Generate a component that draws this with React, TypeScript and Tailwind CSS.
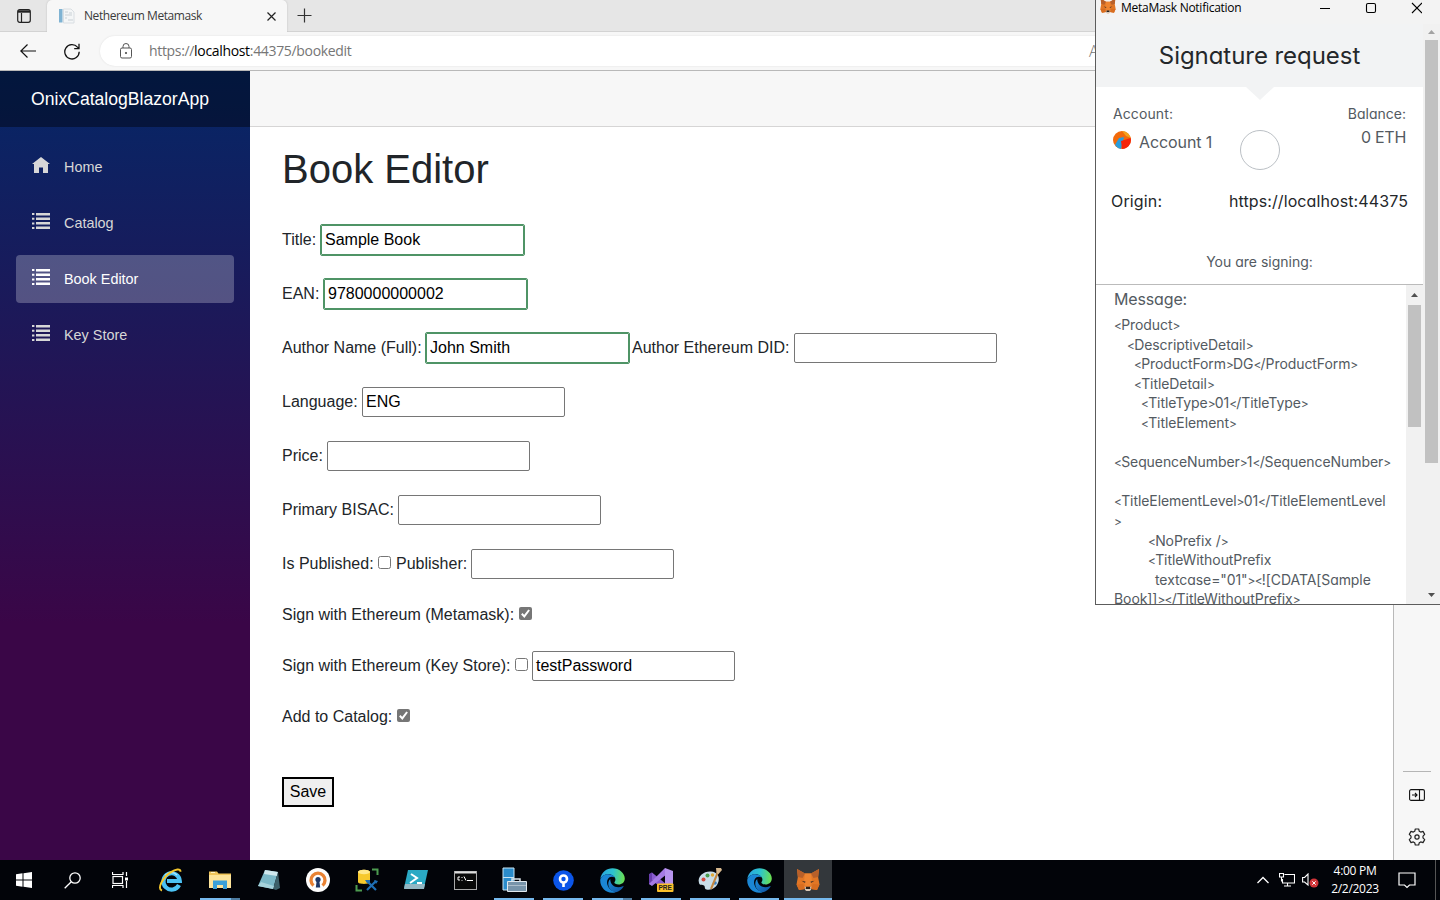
import React from "react";

const ui = "font-['Open_Sans','Noto_Sans',sans-serif]";
const euclid = "font-[Inter,sans-serif] [font-feature-settings:'cv11']";

function Fox({ size }: { size: number }) {
  return (
    <svg width={size} height={size} viewBox="0 0 24 24">
      <path d="M1 1l8 4.500h6L23 1l-.8 8.500 1.300 7L21 22l-6-1-1.500 2h-3L9 21l-6 1-2.500-5.500 1.300-7z" fill="#e27625" />
      <path d="M1 1l8 4.500-2.500 4.500L2 9z M23 1l-8 4.500 2.500 4.500L22 9z" fill="#b8602a" />
      <path d="M9 5.500h6l1 8-1.500 5h-5L8 13.500z" fill="#ee8430" />
      <path d="M5.500 12.700l4 .8-.5 1.500zM18.500 12.700l-4 .8.5 1.500z" fill="#4a3324" />
      <path d="M8.500 18.500l1.500.5h4l1.500-.5-.5 3.500-1.500 1h-3L9 22z" fill="#d8c9ba" />
      <path d="M10 18.800h4l.3 2.200H9.700z" fill="#2a211c" />
      <path d="M.5 16.500L7 16l2 5-6 1zM23.500 16.500L17 16l-2 5 6 1z" fill="#d86d20" />
    </svg>
  );
}

function Edge() {
  return (
    <svg width="25" height="25" viewBox="0 0 24 24">
      <defs>
        <linearGradient id="edgeTop" x1="0" y1=".4" x2="1" y2=".5">
          <stop offset="0" stopColor="#2aa5e0" />
          <stop offset=".5" stopColor="#2cc3cf" />
          <stop offset="1" stopColor="#6be04f" />
        </linearGradient>
        <linearGradient id="edgeLow" x1="0" y1="0" x2="1" y2="1">
          <stop offset="0" stopColor="#1c8fdc" />
          <stop offset="1" stopColor="#0f4f9e" />
        </linearGradient>
      </defs>
      <path d="M.3 10C1.500 4 6.300.2 12 .2c6.500 0 11.800 4.800 11.800 9.800 0 3.500-2.700 5.800-6 5.800-2.500 0-4-1-4-1.800 0-.6 1-1.100 1-2.900C14.800 8.500 12 6 8.300 6 4.500 6 1.500 8 .3 10z" fill="url(#edgeTop)" />
      <path d="M.2 12C.2 8.500 4 6 8 6c3 0 5 1.200 6 3-5-2-8 2-7 6.500 1 4.200 4.500 7 8.500 7.200-1 .8-2.500 1.100-4 1.100C5.500 23.800.2 18.500.2 12z" fill="#1b86d4" />
      <path d="M9.800 10.500c-3.500 3-2.300 12 5.500 12.700 3-.6 5.500-2.500 7.200-5.200.3-.5-.2-.8-.6-.6-5.900 2.800-12.200-.4-12.100-6.900z" fill="url(#edgeLow)" />
    </svg>
  );
}

const taskIcons: { icon: React.ReactNode; running?: boolean; multi?: boolean; active?: boolean }[] = [
  {
    icon: (
      <svg width="26" height="26" viewBox="0 0 26 26">
        <path d="M21 18A8.200 8.200 0 1 1 21.800 14H9" fill="none" stroke="#4cc3f5" strokeWidth="4.200" />
        <path d="M7 8.500A8 8 0 0 1 19 8" fill="none" stroke="#a9e6fc" strokeWidth="1.500" />
        <path d="M4 23.500C-1.500 22 5 10 12.500 5.300 17.500 2.300 22.500 1 22.500 4.700" fill="none" stroke="#f3c62c" strokeWidth="2" />
      </svg>
    ),
  },
  {
    icon: (
      <svg width="24" height="22" viewBox="0 0 24 22">
        <path d="M1 2.500h8l1.500 2H23V19H1z" fill="#f0c55a" />
        <path d="M1 6h22v13H1z" fill="#fde49a" />
        <path d="M3 3.500h4" stroke="#fff3c4" />
        <path d="M5 20v-8.500h14V20h-4v-4H9v4z" fill="#3aa0d8" />
      </svg>
    ),
    running: true,
    multi: true,
  },
  {
    icon: (
      <svg width="24" height="22" viewBox="0 0 24 22">
        <path d="M8 1l13 2-5 17L1 17z" fill="#7cb9c8" />
        <path d="M8 1l13 2-1 4L7 5z" fill="#cfe8ed" />
        <path d="M21 3l2 16-4 2-3-1z" fill="#3d6069" />
        <path d="M4 13l13 4-1 3L1 17z" fill="#a7d3dc" />
      </svg>
    ),
  },
  {
    icon: (
      <svg width="24" height="24" viewBox="0 0 24 24">
        <circle cx="12" cy="12" r="12" fill="#fdfdfd" />
        <path d="M7.500 17.500a7 7 0 1 1 9 0" fill="none" stroke="#e98233" strokeWidth="3.300" />
        <circle cx="12" cy="11.500" r="2.600" fill="#1d3767" />
        <path d="M10.800 12h2.400l1 7.500H9.800z" fill="#1d3767" />
      </svg>
    ),
  },
  {
    icon: (
      <svg width="24" height="24" viewBox="0 0 24 24">
        <path d="M3 4c0-3 12-3 12 0v10c0 2.500-12 2.500-12 0z" fill="#f7c92c" />
        <ellipse cx="9" cy="4" rx="6" ry="2.200" fill="#ffe88a" />
        <path d="M17 1.500h5.500V7M1.500 17v5.500H7" fill="none" stroke="#4d9b50" strokeWidth="2" />
        <path d="M12 22l9-9M12 13l9 9" stroke="#1f6fb5" strokeWidth="2.200" />
        <path d="M10 12h5v3h-3zM19 12l4 1-2 3z" fill="#1f6fb5" />
      </svg>
    ),
  },
  {
    icon: (
      <svg width="26" height="22" viewBox="0 0 26 22">
        <path d="M5 1h20l-4 18H1z" fill="#2aa9c4" />
        <path d="M2 15h20l-1 5H1z" fill="#93b7c3" />
        <path d="M8 5l6 4-7 5M14 14h5" fill="none" stroke="#fff" strokeWidth="2" />
      </svg>
    ),
  },
  {
    icon: (
      <svg width="23" height="19" viewBox="0 0 23 19">
        <rect x=".5" y=".5" width="22" height="18" fill="#080808" stroke="#a9a9a9" />
        <path d="M1 1.500h21" stroke="#ddd" strokeWidth="2" />
        <path d="M6 6H4v3h2M8 6v1M8 9v.8M10 5.500l2 4M13 9.500h6" fill="none" stroke="#fff" />
      </svg>
    ),
  },
  {
    icon: (
      <svg width="26" height="26" viewBox="0 0 26 26">
        <path d="M2 1h11v22H2z" fill="#2b8ccb" stroke="#c8e6f7" />
        <path d="M2 10.500h11" stroke="#c8e6f7" />
        <path d="M11 14v-2h8v2" fill="none" stroke="#dae3ea" strokeWidth="1.500" />
        <path d="M6.500 14.500h19v10h-19z" fill="#7794aa" stroke="#e0e8ee" />
        <path d="M7 18.500h18" stroke="#b9c8d3" strokeWidth=".8" />
      </svg>
    ),
    running: true,
  },
  {
    icon: (
      <svg width="21" height="21" viewBox="0 0 21 21">
        <circle cx="10.500" cy="10.500" r="10.300" fill="#0b55e8" />
        <circle cx="10.500" cy="9" r="3.500" fill="none" stroke="#fff" strokeWidth="2.600" />
        <path d="M10.500 12v5" stroke="#fff" strokeWidth="2.600" />
      </svg>
    ),
    running: true,
  },
  { icon: <Edge />, running: true, multi: true },
  {
    icon: (
      <svg width="26" height="26" viewBox="0 0 26 26">
        <path d="M1 8l3-2.500L18 17v4.500l-3 .5L1 11z" fill="#8a5cd0" />
        <path d="M1 7l3-1.500v13L1 17z" fill="#6a3fae" />
        <path d="M1 17l16-16 2 6L4 19z" fill="#a57be4" />
        <path d="M17 1l8 3v16l-8 3z" fill="#b794ee" />
        <rect x="9" y="16.500" width="16.500" height="8.500" rx="1" fill="#fbc02a" />
        <text x="17.200" y="23.300" textAnchor="middle" fontSize="6.500" fontWeight="bold" fontFamily="Liberation Sans" fill="#222">PRE</text>
      </svg>
    ),
    running: true,
  },
  {
    icon: (
      <svg width="26" height="26" viewBox="0 0 26 26">
        <path d="M2 16C0 9 7 4 14 4.500c6 .4 9 5 7.500 10-1.500 6-7 9-12 8-2.500-.5-1-3-2.500-4-1.500-1-4.200.5-5-2.500z" fill="#c9dde8" />
        <circle cx="6.500" cy="12.500" r="2" fill="#d34a3f" />
        <circle cx="10.500" cy="8.500" r="2" fill="#4a9c4d" />
        <circle cx="15.500" cy="8" r="1.700" fill="#e0a836" />
        <circle cx="18" cy="16" r="1.800" fill="#3a7fc0" />
        <path d="M21 5l-7 17" stroke="#c28742" strokeWidth="2" />
        <path d="M19 1l5 0 1 2-3.500 4-2-1z" fill="#d8b98f" />
      </svg>
    ),
    running: true,
  },
  { icon: <Edge />, running: true },
  { icon: <Fox size={24} />, running: true, active: true },
];

function TaskButton({ icon, running, multi, active }: (typeof taskIcons)[number]) {
  return (
    <div className={active ? "flex h-10 w-12 flex-col items-center bg-[#33373b]" : "flex h-10 w-[49px] flex-col items-center pr-px"}>
      <div className="flex h-[38px] items-center justify-center pt-[2px]">{icon}</div>
      {running && (
        <div className={active ? "h-[2px] w-full bg-[#76b9ed]" : "flex h-[2px] w-10 justify-end bg-[#76b9ed]"}>
          {multi && <div className="h-full w-[9px] bg-[#4d7ba0]" />}
        </div>
      )}
    </div>
  );
}

function HomeIcon() {
  return (
    <svg width="18" height="16" viewBox="0 0 18 16" className="fill-current">
      <path d="M9 0L0 7h2v9h5v-5.500h4V16h5V7h2z" />
    </svg>
  );
}

function ListIcon() {
  return (
    <svg width="18" height="16" viewBox="0 0 18 16" className="fill-current">
      <path d="M0 0h2.400v2H0zM0 4.700h2.400v2H0zM0 9.400h2.400v2H0zM0 14h2.400v2H0zM4 0h14v2.500H4zM4 4.500h14V7H4zM4 9h14v2.500H4zM4 13.500h14V16H4z" />
    </svg>
  );
}

function NavItem({ label, home, active }: { label: string; home?: boolean; active?: boolean }) {
  return (
    <div className={active ? "flex h-12 items-center rounded bg-white/25 pl-4 text-white" : "flex h-12 items-center pl-4 text-[#d7d7d7]"}>
      <div className="w-8 pb-[4px]">{home ? <HomeIcon /> : <ListIcon />}</div>
      <span className="text-[14.4px]">{label}</span>
    </div>
  );
}

function Field({ value = "", valid }: { value?: string; valid?: boolean }) {
  return (
    <div
      className={
        valid
          ? "flex h-[30px] w-[203px] shrink-0 items-center rounded-[1px] border border-[#4f9466] bg-white pl-[3px] text-black outline outline-1 outline-[#4f9466]"
          : "flex h-[30px] w-[203px] shrink-0 items-center rounded-[2px] border border-[#767676] bg-white pl-[3px] text-black"
      }
    >
      {value}
    </div>
  );
}

function Check({ on }: { on?: boolean }) {
  return on ? (
    <svg width="13" height="13" viewBox="0 0 13 13" className="mb-[3px] shrink-0">
      <rect width="13" height="13" rx="2" fill="#767676" />
      <path d="M2.800 6.800l2.500 2.600 4.800-6.400" fill="none" stroke="#fff" strokeWidth="2" />
    </svg>
  ) : (
    <div className="mb-[3px] size-[13px] shrink-0 rounded-[2.500px] border border-[#767676] bg-white" />
  );
}

const xml: [number, string][] = [
  [0, "<Product>"],
  [13, "<DescriptiveDetail>"],
  [20, "<ProductForm>DG</ProductForm>"],
  [20, "<TitleDetail>"],
  [27, "<TitleType>01</TitleType>"],
  [27, "<TitleElement>"],
  [0, ""],
  [0, "<SequenceNumber>1</SequenceNumber>"],
  [0, ""],
  [0, "<TitleElementLevel>01</TitleElementLevel"],
  [0, ">"],
  [34, "<NoPrefix />"],
  [34, "<TitleWithoutPrefix"],
  [41, 'textcase="01"><![CDATA[Sample'],
  [0, "Book]]></TitleWithoutPrefix>"],
];

function XmlLine({ indent, text }: { indent: number; text: string }) {
  return (
    <div className="h-[19.600px] whitespace-nowrap" style={{ paddingLeft: indent }}>
      {text.split(/([<>])/).map((part, i) =>
        part === "<" || part === ">" ? (
          <span key={i} className="text-[12px] tracking-[-0.8px]">{part}</span>
        ) : (
          part
        ),
      )}
    </div>
  );
}

function Arrow({ down, color }: { down?: boolean; color: string }) {
  return (
    <svg width="7" height="4" viewBox="0 0 7 4">
      <path d={down ? "M0 0h7L3.500 4z" : "M0 4h7L3.500 0z"} fill={color} />
    </svg>
  );
}

function MetaMaskWindow() {
  return (
    <div className="absolute right-0 top-0 flex h-[605px] w-[345px] flex-col overflow-hidden border-b border-l border-[#5c5c5c] bg-white">
      <div className={`flex h-6 shrink-0 items-start bg-[#f3f3f3] pl-1 text-black ${ui}`}>
        <div className="-mt-[2px] h-4 w-4"><Fox size={16} /></div>
        <span className="ml-[5px] text-[12px] leading-4 tracking-[-0.27px]">MetaMask Notification</span>
        <svg className="ml-auto mr-[18px]" width="102" height="16" viewBox="0 0 102 16" fill="none" stroke="#000" strokeWidth="1.100">
          <path d="M0 8.500h10M92 3l10 10M102 3L92 13" />
          <rect x="46.500" y="3.500" width="9" height="9" rx="1.500" />
        </svg>
      </div>
      <div className="flex min-h-0 flex-1">
        <div className={`flex w-[327px] flex-col text-[#535a61] ${euclid}`}>
          <div className="flex h-[63px] shrink-0 items-center justify-center bg-[#f2f3f4] text-2xl tracking-[-0.05px] text-[#24272a]">
            Signature request
          </div>
          <svg className="shrink-0 self-center" width="28" height="13" viewBox="0 0 28 13">
            <path d="M0 0h28L14 13z" fill="#f2f3f4" />
          </svg>
          <div className="flex h-[89px] shrink-0 justify-between pl-[17px] pr-[17px] pt-1">
            <div className="w-[127px]">
              <div className="text-sm leading-5 tracking-[0.1px]">Account:</div>
              <div className="mt-[7px] flex items-center">
                <svg width="18" height="18" viewBox="0 0 18 18" className="mb-1">
                  <circle cx="9" cy="9" r="9" fill="#f26a0a" />
                  <path d="M9 0a9 9 0 0 1 8.700 7L13 5z" fill="#f5a21a" />
                  <path d="M6 7l5-1-3 12A9 9 0 0 1 2 14z" fill="#2a9ddb" />
                  <path d="M8 10l9.700-3A9 9 0 0 1 9 18z" fill="#f5250a" />
                </svg>
                <span className="ml-2 text-base leading-5 tracking-[-0.1px]">Account 1</span>
              </div>
            </div>
            <div className="mt-[26px] size-10 shrink-0 rounded-full border border-[#bbc0c5]" />
            <div className="w-[127px] text-right">
              <div className="text-sm leading-5">Balance:</div>
              <div className="mt-[3px] text-base leading-5 tracking-[-0.3px]">0 ETH</div>
            </div>
          </div>
          <div className="flex h-[25px] shrink-0 items-center justify-between pb-[2px] pl-[15px] pr-[15px] text-base text-[#24272a]">
            <span className="tracking-[0.15px]">Origin:</span>
            <span className="tracking-[0.1px]">https://localhost:44375</span>
          </div>
          <div className="flex h-[71px] shrink-0 items-end justify-center border-b border-[#bbb] pb-[12px] text-sm leading-5">You are signing:</div>
          <div className="flex min-h-0 flex-1">
            <div className="min-w-0 flex-1 overflow-hidden pl-[18px] pt-[3px]">
              <div className="text-base leading-[22px] tracking-[-0.15px]">Message:</div>
              <div className="pt-[5px] text-sm leading-[19.600px] tracking-[-0.08px]">
                {xml.map(([indent, text], i) => (
                  <XmlLine key={i} indent={indent} text={text} />
                ))}
              </div>
            </div>
            <div className="flex w-[17px] flex-col items-center bg-[#f1f1f1] pt-[8px]">
              <Arrow color="#505050" />
              <div className="mt-2 h-[122px] w-[13px] bg-[#c1c1c1]" />
            </div>
          </div>
        </div>
        <div className="flex w-[17px] flex-col items-center bg-[#f1f1f1] pb-[7px] pt-[6px]">
          <Arrow color="#a3a3a3" />
          <div className="mt-[6px] h-[423px] w-[13px] bg-[#c1c1c1]" />
          <div className="mt-auto flex"><Arrow down color="#505050" /></div>
        </div>
      </div>
    </div>
  );
}

export default function App() {
  return (
    <div className="relative flex h-[900px] w-[1440px] flex-col overflow-hidden bg-white font-['Liberation_Sans',Arial,sans-serif] text-base leading-6 text-[#212529]">
      <div className={`flex h-8 shrink-0 bg-[#e6e6e6] ${ui}`}>
        <div className="flex w-[47px] items-center border-b border-[#d3d3d3] pl-[17px]">
          <svg width="14" height="14" viewBox="0 0 14 14" fill="none" stroke="#222" strokeWidth="1.200">
            <rect x=".7" y=".7" width="12.600" height="12.600" rx="2" />
            <path d="M1 2.500h12" strokeWidth="2.400" />
            <path d="M4.500 4v9" />
          </svg>
        </div>
        <div className="flex w-[240px] items-center rounded-t-[5px] bg-[#f7f7f7] pl-3 shadow-[0_0_2px_#bbb] [clip-path:inset(-2px_-2px_0_-2px)]">
          <svg width="16" height="16" viewBox="0 0 16 16">
            <path d="M0 1h3.500v13.500H0z" fill="#7fb3d3" />
            <path d="M4.500 1h7.500l3 3v11H4.500z" fill="#f4f6f7" stroke="#d9dee2" />
            <path d="M6 4h3M6 7h7M6 10h2M9 12h5M10 5h3" stroke="#c9d0d5" />
          </svg>
          <span className="ml-[9px] w-[183px] text-[12px] leading-4 tracking-[-0.43px] text-[#3b3b3b]">Nethereum Metamask</span>
          <svg width="9" height="9" viewBox="0 0 9 9" stroke="#222" strokeWidth="1.200"><path d="M.5.5l8 8M8.500.5l-8 8" /></svg>
        </div>
        <div className="flex flex-1 items-center border-b border-[#d3d3d3] pl-[10px]">
          <svg width="15" height="15" viewBox="0 0 15 15" stroke="#333" strokeWidth="1.200"><path d="M7.500.5v14M.5 7.500h14" /></svg>
        </div>
      </div>
      <div className={`flex h-[39px] shrink-0 items-center border-b border-[#b9b9b9] bg-[#f7f7f7] pl-5 ${ui}`}>
        <svg width="16" height="14" viewBox="0 0 16 14" fill="none" stroke="#111" strokeWidth="1.200"><path d="M16 7H.8M7.500.5L.8 7l6.700 6.500" /></svg>
        <svg className="ml-7" width="16" height="17" viewBox="0 0 16 17" fill="none" stroke="#111" strokeWidth="1.300">
          <path d="M15.200 8.800A7.200 7.200 0 1 1 13.500 4.100L15 5.600M15 .8v4.800h-4.800" />
        </svg>
        <div className="ml-5 flex h-[30px] flex-1 items-center rounded-l-full bg-white pl-5 text-[14px] text-[#767676] shadow-[0_0_2px_#ddd]">
          <svg width="12" height="16" viewBox="0 0 12 16" fill="none" stroke="#555">
            <rect x=".5" y="5" width="11" height="10" rx="1.500" />
            <path d="M3 5V3.500a3 3 0 0 1 6 0V5" />
            <circle cx="6" cy="10" r=".7" fill="#555" />
          </svg>
          <span className="ml-[17px] w-[940px] tracking-[-0.33px]">https://<span className="text-black">localhost</span>:44375/bookedit</span>
          <span className="text-[16px] font-light">A</span>
        </div>
      </div>

      <div className="flex h-[789px] shrink-0">
        <div className="flex w-[250px] flex-col bg-[linear-gradient(180deg,#052767_0%,#3a0647_70%)]">
          <div className="flex h-14 items-center bg-black/40 pl-[31px] text-[17.600px] text-white">OnixCatalogBlazorApp</div>
          <div className="flex flex-col gap-2 px-4 pt-4">
            <NavItem label="Home" home />
            <NavItem label="Catalog" />
            <NavItem label="Book Editor" active />
            <NavItem label="Key Store" />
          </div>
        </div>
        <div className="flex flex-1 flex-col">
          <div className="h-14 border-b border-[#d6d5d5] bg-[#f7f7f7]" />
          <div className="flex flex-col items-start gap-6 pl-8 pt-[18px]">
            <h1 className="h-[56px] text-[40px] font-normal leading-[48px]">Book Editor</h1>
            <div className="flex items-center"><span className="w-[39px]">Title:</span><Field value="Sample Book" valid /></div>
            <div className="flex items-center"><span className="w-[42px]">EAN:</span><Field value="9780000000002" valid /></div>
            <div className="flex items-center">
              <span className="w-[144px]">Author Name (Full):</span><Field value="John Smith" valid />
              <span className="ml-[3px] w-[162px]">Author Ethereum DID:</span><Field />
            </div>
            <div className="flex items-center"><span className="w-[80px]">Language:</span><Field value="ENG" /></div>
            <div className="flex items-center"><span className="w-[45px]">Price:</span><Field /></div>
            <div className="flex items-center"><span className="w-[116px]">Primary BISAC:</span><Field /></div>
            <div className="flex items-center">
              <span className="w-[96px]">Is Published:</span><Check />
              <span className="ml-[5px] w-[75px]">Publisher:</span><Field />
            </div>
            <div className="flex h-6 items-center"><span className="w-[237px]">Sign with Ethereum (Metamask):</span><Check on /></div>
            <div className="flex items-center">
              <span className="mr-1 flex items-center"><span className="w-[233px]">Sign with Ethereum (Key Store):</span><Check /></span>
              <Field value="testPassword" />
            </div>
            <div className="flex h-6 items-center"><span className="w-[115px]">Add to Catalog:</span><Check on /></div>
            <button className="mt-6 h-[30px] w-[52px] border-2 border-black bg-[#efefef] text-black">Save</button>
          </div>
        </div>
        <div className="flex w-[47px] flex-col items-center justify-end border-l border-[#b9b9b9] bg-[#f7f7f7] pb-[14px]">
          <div className="mb-[17px] h-px w-7 bg-[#b5b5b5]" />
          <svg className="mb-[27px]" width="16" height="12" viewBox="0 0 16 12" fill="none" stroke="#111" strokeWidth="1.100">
            <rect x=".6" y=".6" width="14.800" height="10.800" rx="1.500" />
            <path d="M10.500.5v11M3 6h5M6 4l2 2-2 2" />
          </svg>
          <svg width="18" height="18" viewBox="0 0 18 18" fill="none" stroke="#222" strokeWidth="1.200" strokeLinejoin="round">
            <path d="M7.300 1h3.400l.6 2.300 1.400.8 2.300-.7 1.700 3L15 8.100v1.800l1.700 1.700-1.700 3-2.300-.7-1.400.8-.6 2.300H7.300l-.6-2.300-1.400-.8-2.300.7-1.700-3L3 9.900V8.100L1.300 6.400l1.700-3 2.300.7 1.400-.8z" />
            <circle cx="9" cy="9" r="2.100" />
          </svg>
        </div>
      </div>

      <div className={`flex h-10 shrink-0 bg-[#020409] text-white ${ui}`}>
        <div className="flex w-[147px] items-center">
          <div className="flex w-12 justify-center">
            <svg width="16" height="16" viewBox="0 0 16 16" fill="#fff"><path d="M0 2.300L6.500 1.300v6.200H0zM7.500 1.200L16 0v7.500H7.500zM0 8.500h6.500v6.200L0 13.700zM7.500 8.500H16V16l-8.500-1.200z" /></svg>
          </div>
          <div className="flex w-12 justify-center">
            <svg width="17" height="17" viewBox="0 0 17 17" fill="none" stroke="#fff" strokeWidth="1.300"><circle cx="11" cy="6" r="5.200" /><path d="M7.300 9.700L.7 16.300" /></svg>
          </div>
          <div className="flex w-12 justify-center">
            <svg width="16" height="16" viewBox="0 0 16 16" fill="none" stroke="#fff" strokeWidth="1.200">
              <rect x="1" y="4.500" width="9.500" height="7" />
              <path d="M.5 0v2.500h10.500V0M.5 16v-2.500h10.500V16M14.500 0v4M14.500 9v7" />
              <path d="M13 5.500h3v3h-3z" fill="#fff" stroke="none" />
            </svg>
          </div>
        </div>
        {taskIcons.map((t, i) => (
          <TaskButton key={i} {...t} />
        ))}
        <div className="ml-auto flex items-center">
          <svg className="mr-[10px]" width="12" height="8" viewBox="0 0 12 8" fill="none" stroke="#fff" strokeWidth="1.300"><path d="M.5 7L6 1.500 11.500 7" /></svg>
          <svg className="mr-[7px]" width="16" height="14" viewBox="0 0 16 14" fill="none" stroke="#fff" strokeWidth="1.100">
            <path d="M5.500 1.500h10v8.500h-12V6M8.500 10v3M5 13h7" />
            <path d="M.5.5h4v3.500h-4zM2.500 4v4h1" />
          </svg>
          <svg className="mr-[11px]" width="17" height="15" viewBox="0 0 17 15" fill="none">
            <path d="M.6 4.500h2L6 1v11L2.600 9h-2z" stroke="#fff" strokeWidth="1.100" />
            <circle cx="12" cy="10" r="4.500" fill="#d13438" />
            <path d="M10.300 8.300l3.400 3.400M13.700 8.300l-3.400 3.400" stroke="#fff" />
          </svg>
          <div className="w-[50px] whitespace-nowrap text-center text-[12px] leading-[18px] tracking-[-0.3px]">
            <div>4:00 PM</div>
            <div className="-mx-1">2/2/2023</div>
          </div>
          <svg className="ml-[18px] mr-[19px]" width="18" height="17" viewBox="0 0 18 17" fill="none" stroke="#fff" strokeWidth="1.200"><path d="M1 1h16v12h-5.500L9 15.500 6.500 13H1z" /></svg>
          <div className="mr-1 h-10 w-px bg-[#555]" />
        </div>
      </div>
      <MetaMaskWindow />
    </div>
  );
}
